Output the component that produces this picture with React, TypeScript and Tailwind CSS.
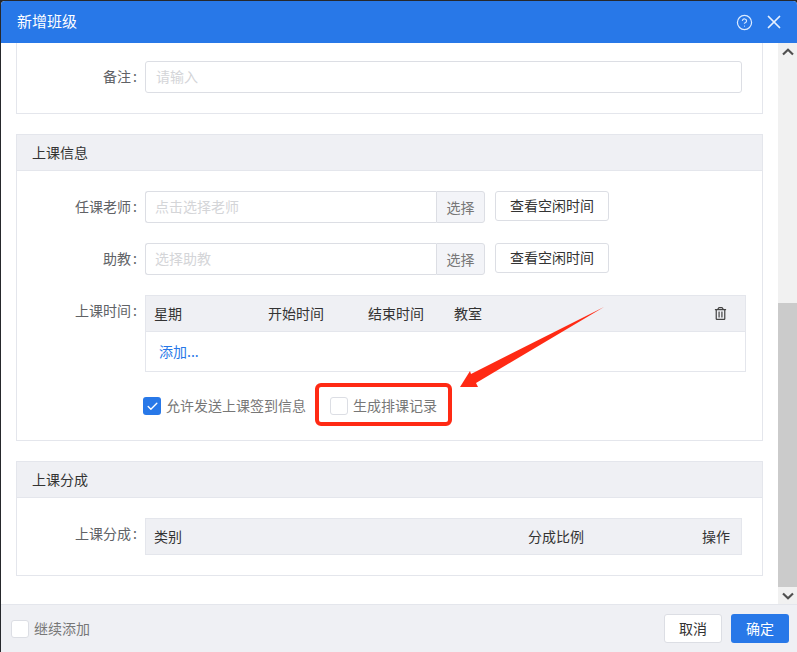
import { CircleHelp, X, Check } from "lucide-react";
import { FaRegTrashAlt } from "react-icons/fa";
import type { ReactNode } from "react";

function Label({ children }: { children: ReactNode }) {
  return (
    <div className="w-[120px] mr-2 shrink-0 text-right text-sm text-[#606266] leading-[30px]">
      {children}
      <span className="inline-block w-[6px] text-right">:</span>
    </div>
  );
}

function SectionHead({ children }: { children: ReactNode }) {
  return (
    <div className="h-[36px] flex items-center pl-[15px] pb-[2px] bg-[#eff0f4] border-b border-[#e4e6ec] text-sm text-[#333]">{children}</div>
  );
}

function PickRow({ placeholder }: { placeholder: string }) {
  return (
    <div className="flex items-start h-[32px]">
      <div className="w-[291px] h-[32px] border border-[#dcdee4] border-r-0 rounded-l-[3px] pl-[9px] text-sm leading-[28px] text-[#d4d5d8]">{placeholder}</div>
      <div className="w-[49px] h-[32px] border border-[#dcdee4] rounded-r-[3px] bg-[#f3f4f8] text-center text-sm leading-[30px] text-[#777]">选择</div>
      <div className="ml-[10px] w-[114px] h-[30px] border border-[#dcdee4] rounded-[3px] bg-white text-center text-sm leading-[26px] text-[#333]">查看空闲时间</div>
    </div>
  );
}

function Box({ checked }: { checked?: boolean }) {
  return checked ? (
    <span className="w-[18px] h-[18px] rounded-[3px] bg-[#2878e8] flex items-center justify-center shrink-0">
      <Check size={13} color="#fff" strokeWidth={2.5} />
    </span>
  ) : (
    <span className="block w-[18px] h-[18px] rounded-[3px] border border-[#dcdee4] bg-white shrink-0" />
  );
}

export default function App() {
  return (
    <div className="w-[797px] h-[652px] bg-[#26282c] pt-px pl-px overflow-hidden" style={{ fontFamily: '"Noto Sans CJK SC", "Liberation Sans", sans-serif' }}>
      <div className="relative w-[796px] h-[651px] flex flex-col bg-white rounded-tl-[4px] rounded-tr-[4px] overflow-hidden">
        <header className="h-[42px] shrink-0 bg-[#2878e8] flex items-center pl-4 text-white">
          <span className="text-[15px] pb-[2px]">新增班级</span>
          <CircleHelp size={17} className="ml-auto mr-[10px]" strokeWidth={1.7} color="#dcebff" />
          <X size={22} className="mr-[12px]" strokeWidth={1.9} color="#e6f0ff" />
        </header>

        <div className="flex-1 min-h-0 flex">
          <main className="flex-1 min-w-0 pl-[15px] pr-[15px]">
            <section className="h-[71px] border border-t-0 border-[#e4e6ec] pt-[18px] flex">
              <Label>备注</Label>
              <div className="w-[597px] h-[32px] border border-[#dcdee4] rounded-[3px] pl-[10px] text-sm leading-[28px] text-[#d4d5d8]">请输入</div>
            </section>

            <section className="mt-[20px] h-[307px] border border-[#e4e6ec]">
              <SectionHead>上课信息</SectionHead>
              <div className="pt-[20px] flex flex-col gap-[20px]">
                <div className="flex">
                  <Label>任课老师</Label>
                  <PickRow placeholder="点击选择老师" />
                </div>
                <div className="flex">
                  <Label>助教</Label>
                  <PickRow placeholder="选择助教" />
                </div>
                <div className="flex">
                  <Label>上课时间</Label>
                  <div className="w-[601px] h-[77px] border border-[#e4e6ec] text-sm">
                    <div className="h-[36px] bg-[#eff0f4] border-b border-[#e4e6ec] flex items-center pl-2 text-[#333]">
                      <span className="w-[114px] pb-[2px]">星期</span>
                      <span className="w-[100px] pb-[2px]">开始时间</span>
                      <span className="w-[86px] pb-[2px]">结束时间</span>
                      <span className="pb-[2px]">教室</span>
                      <FaRegTrashAlt size={13} className="ml-auto mr-[18px] text-[#444]" />
                    </div>
                    <div className="pl-[13px] leading-[39px] text-[#2878e8]">添加...</div>
                  </div>
                </div>
              </div>
              <div className="mt-[23px] ml-[126px] flex items-center text-sm text-[#777]">
                <Box checked />
                <span className="ml-[5px] pb-[2px]">允许发送上课签到信息</span>
                <span className="ml-[24px]"><Box /></span>
                <span className="ml-[5px] pb-[2px]">生成排课记录</span>
              </div>
            </section>

            <section className="mt-[20px] h-[115px] border border-[#e4e6ec]">
              <SectionHead>上课分成</SectionHead>
              <div className="pt-[20px] flex">
                <Label>上课分成</Label>
                <div className="w-[597px] h-[37px] bg-[#eff0f4] border border-[#e4e6ec] flex items-center pl-2 pb-[2px] text-sm text-[#333]">
                  <span className="w-[374px]">类别</span>
                  <span className="w-[174px]">分成比例</span>
                  <span>操作</span>
                </div>
              </div>
            </section>
          </main>

          <aside className="w-[19px] shrink-0 flex flex-col bg-[#f1f1f1]">
            <div className="h-[17px] flex items-center justify-center">
              <svg width="12" height="8" viewBox="0 0 12 8"><path d="M1 6.5 L6 1.8 L11 6.5" fill="none" stroke="#505050" strokeWidth="2.2" /></svg>
            </div>
            <div className="flex-1" />
            <div className="h-[284px] bg-[#cbcbcb]" />
            <div className="h-[17px] flex items-center justify-center">
              <svg width="12" height="8" viewBox="0 0 12 8"><path d="M1 1.5 L6 6.2 L11 1.5" fill="none" stroke="#505050" strokeWidth="2.2" /></svg>
            </div>
          </aside>
        </div>

        <footer className="h-[48px] shrink-0 bg-[#eff0f4] border-t border-[#e4e6ec] flex items-center pl-[10px] pr-[8px]">
          <Box />
          <span className="ml-[5px] pb-[2px] text-sm text-[#777]">继续添加</span>
          <button className="ml-auto w-[58px] h-[29px] bg-white border border-[#dcdee4] rounded-[3px] text-sm leading-[25px] text-[#333]">取消</button>
          <button className="ml-[9px] w-[58px] h-[29px] bg-[#2878e8] rounded-[3px] text-sm leading-[25px] text-white">确定</button>
        </footer>

        <div className="absolute left-[314px] top-[382px] w-[137px] h-[43px] border-[4px] border-[#ff2a14] rounded-[6px]" />
        <svg className="absolute left-[453px] top-[300px]" width="156" height="92" viewBox="454 301 156 92">
          <polygon points="460,387 470,371 471,374 604,307 476,383 478,387" fill="#ff2a14" />
        </svg>
      </div>
    </div>
  );
}
